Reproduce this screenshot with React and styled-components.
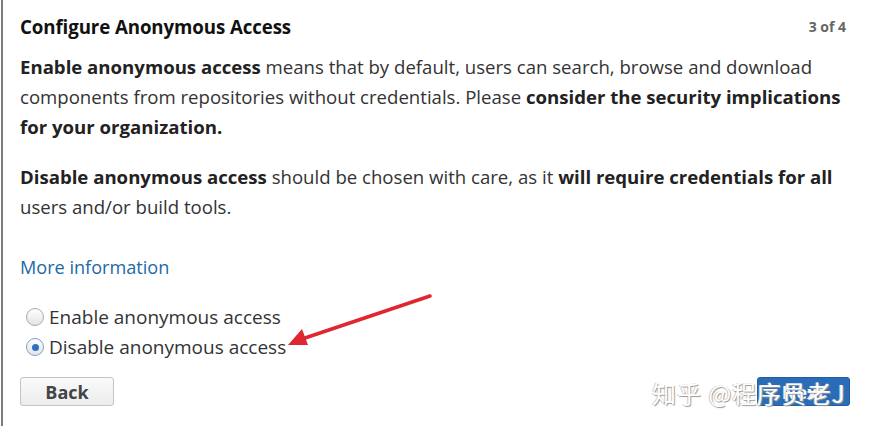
import React from "react";
import styled, { createGlobalStyle } from "styled-components";

const GlobalStyle = createGlobalStyle`
  html, body {
    margin: 0;
    padding: 0;
    background: #fff;
  }
  body {
    font-family: "Open Sans", "Noto Sans", sans-serif;
    color: #333;
  }
`;

const Page = styled.div`
  position: relative;
  width: 873px;
  height: 426px;
  overflow: hidden;
`;

const Panel = styled.div`
  margin-left: 1px;
  height: 426px;
  box-sizing: border-box;
  border-left: 2px solid #7b7b7b;
  padding: 14px 27px 0 17px;
  display: flex;
  flex-direction: column;
`;

const Header = styled.div`
  display: flex;
  justify-content: space-between;
  align-items: center;
  height: 24px;
`;

const Title = styled.h2`
  margin: 0;
  font-size: 18.7px;
  font-weight: 700;
  color: #111;
  letter-spacing: -0.1px;
`;

const Step = styled.span`
  font-size: 14px;
  font-weight: 700;
  color: #666;
`;

const Para = styled.p`
  margin: ${(p) => p.$top}px 0 0;
  font-size: 18.6px;
  line-height: 30px;
  color: #333;
  white-space: nowrap;

  b {
    font-weight: 700;
    color: #222;
  }
`;

const Link = styled.a`
  margin-top: 30px;
  font-size: 18.1px;
  line-height: 30px;
  color: #1c6aa6;
  text-decoration: none;
  align-self: flex-start;
`;

const Options = styled.div`
  margin-top: 20px;
  display: flex;
  flex-direction: column;
`;

const Option = styled.label`
  display: flex;
  align-items: center;
  gap: 5px;
  height: 30px;
  font-size: 19px;
  color: #333;
`;

const Radio = styled.span`
  width: 18px;
  height: 18px;
  box-sizing: border-box;
  border-radius: 50%;
  border: 1px solid ${(p) => (p.$checked ? "#7c9fcf" : "#a9a9a9")};
  background: linear-gradient(#fff, #e4e4e4);
  display: flex;
  align-items: center;
  justify-content: center;
  margin-left: 6px;

  &::after {
    content: "";
    width: 7px;
    height: 7px;
    border-radius: 50%;
    background: ${(p) => (p.$checked ? "#2f6fc4" : "transparent")};
  }
`;

const Footer = styled.div`
  margin-top: 15px;
  display: flex;
  justify-content: space-between;
  align-items: center;
`;

const Button = styled.button`
  height: 29px;
  width: ${(p) => (p.$primary ? 93 : 94)}px;
  padding: 0;
  font-family: "Open Sans", "Noto Sans", sans-serif;
  font-size: 18px;
  font-weight: 700;
  border-radius: 3px;
  border: 1px solid ${(p) => (p.$primary ? "#225d9f" : "#c4c4c4")};
  background: ${(p) => (p.$primary ? "#2b6cb9" : "linear-gradient(#fafafa, #ececec)")};
  color: ${(p) => (p.$primary ? "#fff" : "#444")};
  margin-right: ${(p) => (p.$primary ? -4 : 0)}px;
`;

const Arrow = styled.svg`
  position: absolute;
  left: 280px;
  top: 285px;
`;

const Watermark = styled.div`
  position: absolute;
  left: 652px;
  top: 375px;
  font-family: "Noto Sans CJK SC", sans-serif;
  font-size: 24px;
  color: #fff;
  text-shadow: 1px 1px 1px #999, -1px 0 0 #ccc;
  letter-spacing: 1px;
  white-space: nowrap;
`;

export default function App() {
  return (
    <Page>
      <GlobalStyle />
      <Panel>
        <Header>
          <Title>Configure Anonymous Access</Title>
          <Step>3 of 4</Step>
        </Header>
        <Para $top={14}>
          <b>Enable anonymous access</b> means that by default, users can search, browse and download
          <br />
          components from repositories without credentials. Please{" "}
          <b>consider the security implications</b>
          <br />
          <b>for your organization.</b>
        </Para>
        <Para $top={20}>
          <b>Disable anonymous access</b> should be chosen with care, as it{" "}
          <b>will require credentials for all</b>
          <br />
          users and/or build tools.
        </Para>
        <Link href="#">More information</Link>
        <Options>
          <Option>
            <Radio />
            Enable anonymous access
          </Option>
          <Option>
            <Radio $checked />
            Disable anonymous access
          </Option>
        </Options>
        <Footer>
          <Button>Back</Button>
          <Button $primary>Next</Button>
        </Footer>
      </Panel>
      <Arrow width="160" height="70" viewBox="0 0 160 70">
        <path d="M150 11 L22 54" stroke="#e02631" strokeWidth="3.5" strokeLinecap="round" fill="none" />
        <path d="M8 60 L22 44 L28 60 Z" fill="#e02631" />
      </Arrow>
      <Watermark>知乎 @程序员老J</Watermark>
    </Page>
  );
}
